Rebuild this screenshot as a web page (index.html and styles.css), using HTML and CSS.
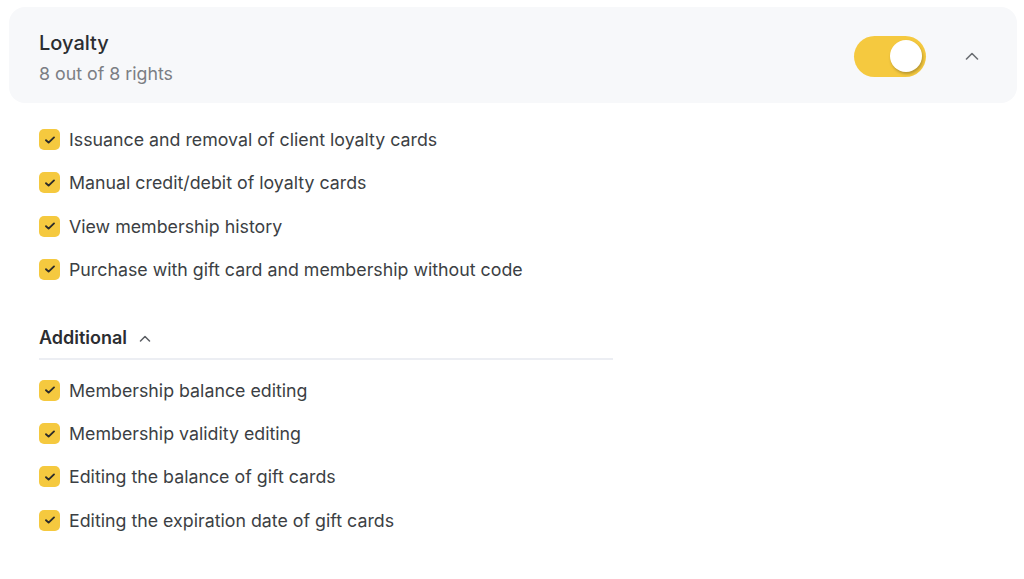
FILE: index.html
```html
<!DOCTYPE html>
<html>
<head>
<meta charset="utf-8">
<link rel="stylesheet" href="styles.css">
</head>
<body>
<div class="panel">
  <div class="header">
    <div class="titles">
      <div class="title">Loyalty</div>
      <div class="subtitle">8 out of 8 rights</div>
    </div>
    <div class="controls">
      <div class="toggle"><div class="knob"></div></div>
      <svg class="chev" width="14" height="8" viewBox="0 0 14 8"><path d="M1.5 7 L7 1.5 L12.5 7" fill="none" stroke="#6b6e73" stroke-width="1.6" stroke-linecap="round" stroke-linejoin="round"/></svg>
    </div>
  </div>
  <div class="content">
    <ul class="list">
      <li><span class="cb"><svg width="12" height="10" viewBox="0 0 12 10"><path d="M2 5.2 L4.6 7.6 L10 2.4" fill="none" stroke="#2b2b2b" stroke-width="1.9" stroke-linecap="round" stroke-linejoin="round"/></svg></span>Issuance and removal of client loyalty cards</li>
      <li><span class="cb"><svg width="12" height="10" viewBox="0 0 12 10"><path d="M2 5.2 L4.6 7.6 L10 2.4" fill="none" stroke="#2b2b2b" stroke-width="1.9" stroke-linecap="round" stroke-linejoin="round"/></svg></span>Manual credit/debit of loyalty cards</li>
      <li><span class="cb"><svg width="12" height="10" viewBox="0 0 12 10"><path d="M2 5.2 L4.6 7.6 L10 2.4" fill="none" stroke="#2b2b2b" stroke-width="1.9" stroke-linecap="round" stroke-linejoin="round"/></svg></span>View membership history</li>
      <li><span class="cb"><svg width="12" height="10" viewBox="0 0 12 10"><path d="M2 5.2 L4.6 7.6 L10 2.4" fill="none" stroke="#2b2b2b" stroke-width="1.9" stroke-linecap="round" stroke-linejoin="round"/></svg></span>Purchase with gift card and membership without code</li>
    </ul>
    <div class="section">
      <span class="section-title">Additional</span>
      <svg class="chev-small" width="12" height="7" viewBox="0 0 12 7"><path d="M1.5 6 L6 1.5 L10.5 6" fill="none" stroke="#5a5d62" stroke-width="1.5" stroke-linecap="round" stroke-linejoin="round"/></svg>
    </div>
    <ul class="list">
      <li><span class="cb"><svg width="12" height="10" viewBox="0 0 12 10"><path d="M2 5.2 L4.6 7.6 L10 2.4" fill="none" stroke="#2b2b2b" stroke-width="1.9" stroke-linecap="round" stroke-linejoin="round"/></svg></span>Membership balance editing</li>
      <li><span class="cb"><svg width="12" height="10" viewBox="0 0 12 10"><path d="M2 5.2 L4.6 7.6 L10 2.4" fill="none" stroke="#2b2b2b" stroke-width="1.9" stroke-linecap="round" stroke-linejoin="round"/></svg></span>Membership validity editing</li>
      <li><span class="cb"><svg width="12" height="10" viewBox="0 0 12 10"><path d="M2 5.2 L4.6 7.6 L10 2.4" fill="none" stroke="#2b2b2b" stroke-width="1.9" stroke-linecap="round" stroke-linejoin="round"/></svg></span>Editing the balance of gift cards</li>
      <li><span class="cb"><svg width="12" height="10" viewBox="0 0 12 10"><path d="M2 5.2 L4.6 7.6 L10 2.4" fill="none" stroke="#2b2b2b" stroke-width="1.9" stroke-linecap="round" stroke-linejoin="round"/></svg></span>Editing the expiration date of gift cards</li>
    </ul>
  </div>
</div>
</body>
</html>
```
FILE: styles.css
```css
* { box-sizing: border-box; }
html, body { margin: 0; padding: 0; background: #ffffff; }
body {
  font-family: Inter, "Liberation Sans", sans-serif;
  color: #3a3d42;
}
.panel { padding: 7px 7px 0 9px; }
.header {
  height: 96px;
  background: #f7f8fa;
  border-radius: 16px;
  display: flex;
  align-items: center;
  justify-content: space-between;
  padding: 0 38px 0 30px;
}
.titles { display: flex; flex-direction: column; gap: 8px; margin-top: 6px; }
.title { font-size: 20px; font-weight: 500; color: #2b2d31; line-height: 24px; }
.subtitle { font-size: 17.8px; color: #7b7e84; line-height: 22px; }
.controls { display: flex; align-items: center; gap: 39px; margin-top: 2px; }
.toggle {
  width: 72px; height: 41px; border-radius: 21px;
  background: #f5c93f;
  display: flex; align-items: center; justify-content: flex-end;
  padding-right: 4px;
}
.knob {
  width: 32px; height: 32px; border-radius: 50%;
  background: #ffffff;
  box-shadow: 1px 2px 3px rgba(0,0,0,0.25);
}
.chev { display: block; }
.content { padding: 26px 0 0 30px; }
.list { list-style: none; margin: 0; padding: 0; display: flex; flex-direction: column; gap: 22.3px; }
.list li {
  display: flex; align-items: center; gap: 9px;
  font-size: 17.8px; line-height: 21px; color: #3c3f44;
}
.cb {
  width: 21px; height: 21px; border-radius: 5px;
  background: #f5c93f;
  display: flex; align-items: center; justify-content: center;
  flex: none;
}
.cb svg { display: block; }
.section {
  margin-top: 47px;
  width: 574px;
  border-bottom: 2px solid #eceef3;
  display: flex; align-items: center; gap: 12px;
  padding-bottom: 9px;
  margin-bottom: 20px;
}
.section-title { font-size: 18px; font-weight: 600; color: #2b2d31; line-height: 22px; }
.chev-small { display: block; margin-top: 1px; }
```
